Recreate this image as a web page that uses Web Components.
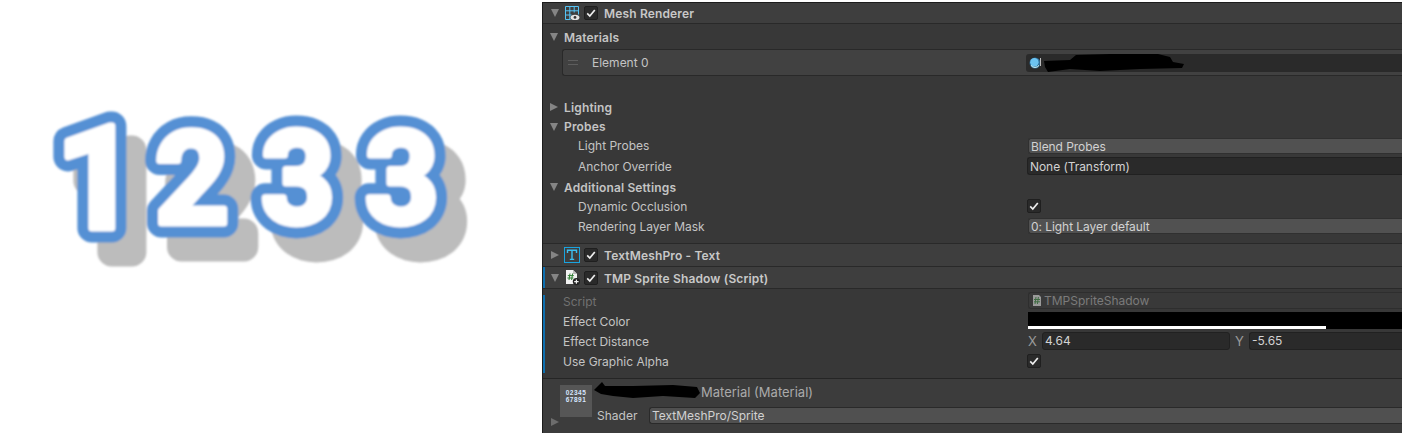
<!DOCTYPE html>
<html>
<head>
<meta charset="utf-8">
<title>TMP Sprite Shadow</title>
<style>
  html, body { margin: 0; height: 433px; overflow: hidden; background: #fff; }
  body { display: flex; font: 12px Inter, "Liberation Sans", sans-serif; }
</style>
</head>
<body>
<digit-preview></digit-preview>
<unity-inspector>
  <comp-header icon="mesh" open style="--h:21px">Mesh Renderer</comp-header>
  <fold-row open style="--h:20px;margin-top:3px">Materials</fold-row>
  <element-row label="Element 0"></element-row>
  <fold-row style="--h:20px;margin-top:21px">Lighting</fold-row>
  <fold-row open style="--h:19px">Probes</fold-row>
  <prop-row indent="35"><span slot="label">Light Probes</span><value-field kind="popup" style="margin:2px 0 0 1px;--fh:16px">Blend Probes</value-field></prop-row>
  <prop-row indent="35" style="--h:21px;--lh:22px"><span slot="label">Anchor Override</span><value-field kind="object" style="margin-top:1px;--fh:18px">None (Transform)</value-field></prop-row>
  <fold-row open style="--h:20px">Additional Settings</fold-row>
  <prop-row indent="35"><span slot="label">Dynamic Occlusion</span><check-box style="margin-top:2px"></check-box></prop-row>
  <prop-row indent="35" style="margin-bottom:6px"><span slot="label">Rendering Layer Mask</span><value-field kind="popup" style="margin:1px 0 0 1px;--fh:16px">0: Light Layer default</value-field></prop-row>
  <comp-header icon="text" divider style="--h:24px;--tp:1px">TextMeshPro - Text</comp-header>
  <comp-header icon="script" open accent style="--h:22px;--tp:1px">TMP Sprite Shadow (Script)</comp-header>
  <script-section>
    <prop-row indent="20" dim><span slot="label">Script</span><value-field kind="script" style="margin:0 0 0 1px;--fh:17px">TMPSpriteShadow</value-field></prop-row>
    <prop-row indent="20"><span slot="label">Effect Color</span><color-bar></color-bar></prop-row>
    <prop-row indent="20"><span slot="label">Effect Distance</span><vector-field x="4.64" y="-5.65"></vector-field></prop-row>
    <prop-row indent="20"><span slot="label">Use Graphic Alpha</span><check-box style="margin-top:2px"></check-box></prop-row>
  </script-section>
  <material-header name="Material (Material)" shader="TextMeshPro/Sprite"></material-header>
</unity-inspector>

<script>
// shared bits
const CHECK = `<svg width="10" height="10" viewBox="0 0 10 10"><path d="M1.2 5.4 3.8 8 8.8 2" fill="none" stroke="#eee" stroke-width="1.7"/></svg>`;
const ICONS = {
  mesh: `<svg width="16" height="16" viewBox="0 0 16 16" fill="none"><path d="M1.5 1.5h13v8M1.5 1.5v13h5M1.5 5.8h13M1.5 10h6M5.8 1.5v13M10.2 1.5v6" stroke="#55c4f5"/><ellipse cx="11" cy="12.4" rx="4.4" ry="2.6" fill="#e2e2e2"/><circle cx="11" cy="12.4" r="1.4" fill="#333"/></svg>`,
  text: `<svg width="16" height="16" viewBox="0 0 16 16" fill="none"><rect x=".5" y=".5" width="15" height="15" stroke="#19a4e0"/><path d="M3.5 6V3.2h9V6M8 3.2v9M5.8 12.4h4.4" stroke="#3cc0f2" stroke-width="1.4"/></svg>`,
  script: `<svg width="17" height="17" viewBox="0 0 17 17" fill="none"><path d="M2 1h7l4 4v10H2z" fill="#f2f2f2"/><path d="M9 1v4h4" fill="#bbb"/><path d="M6 4.5 5 11M8.6 4.5 7.6 11M3.8 6.6h6M3.4 9h6" stroke="#2e7d32"/><circle cx="12.4" cy="12.6" r="3.6" fill="#222"/><path d="M12.4 10.4v4.4M10.2 12.6h4.4" stroke="#eee" stroke-width="1.2"/></svg>`
};

class DigitPreview extends HTMLElement {
  constructor() {
    super();
    this.attachShadow({ mode: 'open' }).innerHTML = `
      <style>
        :host { display: block; flex: 0 0 542px; height: 433px; background: #fff; }
        svg { display: block; }
        text { font: 700 128px Roboto, "Liberation Sans", sans-serif; stroke-linejoin: round; stroke-linecap: round; text-anchor: middle; }
      </style>
      <svg width="542" height="433" viewBox="0 0 542 433">
        <defs>
          <text id="digits"><tspan x="97" y="228" font-size="142">1</tspan><tspan x="192 298 402" y="223">233</tspan></text>
          <filter id="soft" x="-5%" y="-5%" width="110%" height="110%"><feGaussianBlur stdDeviation="1"/></filter>
        </defs>
        <g filter="url(#soft)">
          <use href="#digits" x="20" y="24" fill="#bcbcbc" stroke="#bcbcbc" stroke-width="29"/>
          <use href="#digits" fill="#5590d4" stroke="#5590d4" stroke-width="29"/>
          <use href="#digits" fill="#fff" stroke="#fff" stroke-width="7"/>
        </g>
      </svg>`;
  }
}

class UnityInspector extends HTMLElement {
  constructor() {
    super();
    this.attachShadow({ mode: 'open' }).innerHTML = `
      <style>
        :host {
          display: block; flex: 0 0 860px; height: 431px; margin-top: 2px; overflow: hidden;
          background: #383838; color: #c4c4c4; box-sizing: border-box;
          border-top: 1px solid #1c1c1c; border-left: 1px solid #1c1c1c;
          font: 12px Inter, "Liberation Sans", sans-serif;
        }
      </style>
      <slot></slot>`;
  }
}

class CompHeader extends HTMLElement {
  constructor() {
    super();
    const open = this.hasAttribute('open');
    this.attachShadow({ mode: 'open' }).innerHTML = `
      <style>
        :host {
          display: flex; align-items: center; height: var(--h, 22px); box-sizing: border-box;
          background: #3e3e3e; border-bottom: 1px solid #292929; font-weight: 600; letter-spacing: .15px; color: #c8c8c8;
        }
        :host([divider]) { border-top: 1px solid #292929; }
        :host([accent]) { box-shadow: inset 2px 0 #0e70b0; }
        .tri { flex: 0 0 auto; margin-left: 8px; width: 0; height: 0; }
        .down { border: 4.5px solid transparent; border-top: 8px solid #858585; border-bottom: 0; }
        .right { border: 4.5px solid transparent; border-left: 8px solid #858585; border-right: 0; }
        .icon { width: 17px; height: 17px; margin-left: 5px; display: flex; align-items: center; }
        check-box { margin: 0 6px 0 3px; }
        .title { padding-top: var(--tp, 0); }
      </style>
      <span class="tri ${open ? 'down' : 'right'}"></span>
      <span class="icon">${ICONS[this.getAttribute('icon')]}</span>
      <check-box></check-box>
      <span class="title"><slot></slot></span>`;
  }
}

class FoldRow extends HTMLElement {
  constructor() {
    super();
    const open = this.hasAttribute('open');
    this.attachShadow({ mode: 'open' }).innerHTML = `
      <style>
        :host { display: flex; align-items: center; height: var(--h, 20px); font-weight: 600; letter-spacing: .15px; color: #c4c4c4; }
        .tri { margin: 0 6px 0 7px; width: 0; height: 0; }
        .down { border: 4.5px solid transparent; border-top: 8px solid #858585; border-bottom: 0; }
        .right { border: 4.5px solid transparent; border-left: 8px solid #858585; border-right: 0; }
      </style>
      <span class="tri ${open ? 'down' : 'right'}"></span>
      <slot></slot>`;
  }
}

class PropRow extends HTMLElement {
  constructor() {
    super();
    const indent = this.getAttribute('indent') || 20;
    this.attachShadow({ mode: 'open' }).innerHTML = `
      <style>
        :host { display: grid; grid-template-columns: 484px 1fr; height: var(--h, 20px); }
        .label { padding-left: ${indent}px; line-height: var(--lh, 20px); }
        :host([dim]) .label { color: #717171; }
      </style>
      <div class="label"><slot name="label"></slot></div>
      <div><slot></slot></div>`;
  }
}

class ValueField extends HTMLElement {
  constructor() {
    super();
    const script = this.getAttribute('kind') === 'script';
    this.attachShadow({ mode: 'open' }).innerHTML = `
      <style>
        :host {
          display: flex; align-items: center; gap: 2px; height: var(--fh, 18px); box-sizing: border-box;
          padding-left: 2px; border-radius: 3px 0 0 3px; white-space: nowrap; letter-spacing: -.06px;
        }
        :host([kind=popup]) { background: #515151; border: 1px solid #303030; border-right: 0; color: #d2d2d2; }
        :host([kind=object]) { background: #2a2a2a; border: 1px solid #212121; border-right: 0; color: #d2d2d2; }
        :host([kind=script]) { background: #393939; border: 1px solid #2e2e2e; border-right: 0; color: #7b7b7b; padding-left: 3px; letter-spacing: 0; }
        svg { flex: none; }
      </style>
      ${script ? `<svg width="10" height="11" viewBox="0 0 10 11"><path d="M1 0h6l2 2v9H1z" fill="#9a9a9a"/><path d="M4 2 3 9M6.4 2l-1 7M2 4.5h6M2 6.8h6" stroke="#3f6b42"/></svg>` : ''}
      <slot></slot>`;
  }
}

class CheckBox extends HTMLElement {
  constructor() {
    super();
    this.attachShadow({ mode: 'open' }).innerHTML = `
      <style>
        :host {
          display: flex; align-items: center; justify-content: center; flex: none; width: 14px; height: 14px;
          box-sizing: border-box; background: #2a2a2a; border: 1px solid #1f1f1f; border-radius: 2px;
        }
      </style>${CHECK}`;
  }
}

class ElementRow extends HTMLElement {
  constructor() {
    super();
    this.attachShadow({ mode: 'open' }).innerHTML = `
      <style>
        :host {
          display: grid; grid-template-columns: 463px 1fr; align-items: center; box-sizing: border-box;
          height: 27px; margin: 2px 0 0 19px; background: #414141;
          border: 1px solid #292929; border-right: 0; border-radius: 3px 0 0 3px;
        }
        .label { display: flex; align-items: center; }
        .grip { width: 10px; height: 3px; margin: 0 14px 0 5px; border-top: 1px solid #5e5e5e; border-bottom: 1px solid #5e5e5e; }
        .field {
          position: relative; height: 18px; background: #2a2a2a; border-radius: 3px 0 0 3px;
          display: flex; align-items: center; padding-left: 3px;
        }
        .scrawl { position: absolute; left: 14px; top: 0; }
      </style>
      <div class="label"><span class="grip"></span>${this.getAttribute('label')}</div>
      <div class="field">
        <svg width="12" height="12" viewBox="0 0 12 12"><circle cx="6" cy="6" r="5.5" fill="#2f6d96"/><circle cx="5.4" cy="5.2" r="4.2" fill="#6cc4f2"/><path d="M2 8.4a5 5 0 0 0 8 0" stroke="#dff" fill="none"/></svg>
        <svg class="scrawl" width="146" height="18" viewBox="0 0 146 18"><path d="M4 7 30 6 36 1 70 0 118 0 130 3 133 8 144 10 142 14 100 15 60 17 30 15 8 18 5 13z" fill="#000"/><rect y="4" width="1" height="8" fill="#bbb"/></svg>
      </div>`;
  }
}

class ScriptSection extends HTMLElement {
  constructor() {
    super();
    this.attachShadow({ mode: 'open' }).innerHTML = `
      <style>
        :host { display: block; position: relative; padding: 3px 0 6px; border-bottom: 1px solid #252525; }
        .strip { position: absolute; left: 0; top: 6px; height: 78px; width: 2px; background: #0e70b0; }
      </style>
      <span class="strip"></span>
      <slot></slot>`;
  }
}

class ColorBar extends HTMLElement {
  constructor() {
    super();
    this.attachShadow({ mode: 'open' }).innerHTML = `
      <style>
        :host { display: flex; align-items: flex-end; height: 17px; margin: 0 0 0 1px; background: #000; }
        span { width: 298px; height: 3px; background: #fff; }
      </style>
      <span></span>`;
  }
}

class VectorField extends HTMLElement {
  constructor() {
    super();
    this.attachShadow({ mode: 'open' }).innerHTML = `
      <style>
        :host { display: grid; grid-template-columns: 14px 188px 19px 1fr; align-items: center; margin: 0 0 0 1px; }
        label { color: #9a9a9a; font-size: 13px; }
        label.y { padding-left: 5px; }
        .box {
          height: 18px; box-sizing: border-box; line-height: 16px; padding-left: 2px;
          background: #2a2a2a; border: 1px solid #212121; border-radius: 3px; color: #d2d2d2;
        }
        .open { border-right: 0; border-radius: 3px 0 0 3px; }
      </style>
      <label>X</label><div class="box">${this.getAttribute('x')}</div>
      <label class="y">Y</label><div class="box open">${this.getAttribute('y')}</div>`;
  }
}

class MaterialHeader extends HTMLElement {
  constructor() {
    super();
    this.attachShadow({ mode: 'open' }).innerHTML = `
      <style>
        :host { display: block; position: relative; height: 60px; background: #3c3c3c; color: #c4c4c4; }
        .top { height: 28px; box-sizing: border-box; padding-left: 158px; line-height: 27px; font-size: 13px; color: #aaa; }
        .row { display: flex; align-items: center; height: 17px; padding-left: 54px; }
        .shader { width: 52px; }
        .band {
          flex: 1; height: 17px; box-sizing: border-box; background: #505050; border: 1px solid #2a2a2a; border-right: 0;
          border-radius: 3px 0 0 3px; padding-left: 2px; color: #d2d2d2; line-height: 15px;
        }
        .thumb {
          position: absolute; left: 17px; top: 6px; width: 32px; height: 32px; background: #565656;
          font: 700 6.5px/7px "Liberation Sans", sans-serif; color: #d6e6ff; text-align: center; letter-spacing: .5px; padding-top: 4px; box-sizing: border-box;
        }
        .tri { position: absolute; left: 8px; top: 39px; width: 0; height: 0; border: 4.5px solid transparent; border-left: 8px solid #6d6d6d; border-right: 0; }
        .scrawl { position: absolute; left: 50px; top: 2px; }
      </style>
      <div class="top">${this.getAttribute('name')}</div>
      <div class="row"><span class="shader">Shader</span><div class="band">${this.getAttribute('shader')}</div></div>
      <div class="thumb">02345<br>67891</div>
      <svg class="scrawl" width="108" height="18" viewBox="0 0 108 18"><path d="M1 9 9 1 12 5 40 5 80 4 104 6 107 12 102 17 70 15 40 17 20 15 8 13z" fill="#000"/></svg>
      <span class="tri"></span>`;
  }
}

// children first so their upgrade order doesn't matter
customElements.define('check-box', CheckBox);
customElements.define('value-field', ValueField);
customElements.define('digit-preview', DigitPreview);
customElements.define('unity-inspector', UnityInspector);
customElements.define('comp-header', CompHeader);
customElements.define('fold-row', FoldRow);
customElements.define('prop-row', PropRow);
customElements.define('element-row', ElementRow);
customElements.define('script-section', ScriptSection);
customElements.define('color-bar', ColorBar);
customElements.define('vector-field', VectorField);
customElements.define('material-header', MaterialHeader);
</script>
</body>
</html>
